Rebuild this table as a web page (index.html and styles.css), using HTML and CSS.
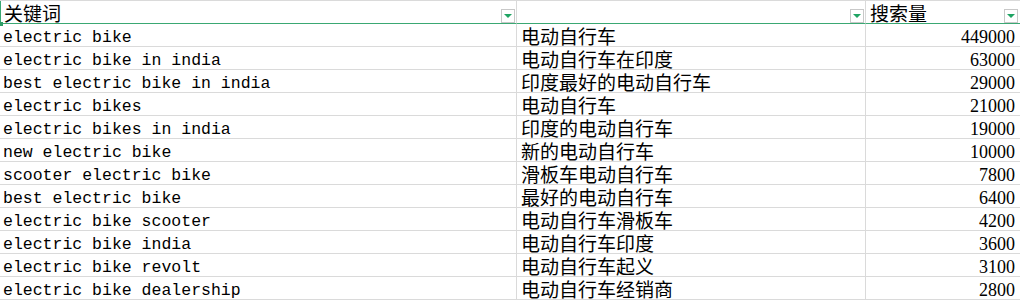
FILE: index.html
```html
<!DOCTYPE html>
<html lang="zh-CN">
<head>
<meta charset="utf-8">
<title>关键词</title>
<link rel="stylesheet" href="styles.css">
</head>
<body>
<div class="sheet">
  <div class="cell head first"><span class="cjk">关键词</span><span class="filter"></span><span class="handle"></span></div>
  <div class="cell head"><span class="filter"></span></div>
  <div class="cell head last"><span class="cjk">搜索量</span><span class="filter"></span></div>

  <div class="cell en">electric bike</div><div class="cell cjk zh">电动自行车</div><div class="cell num last">449000</div>
  <div class="cell en">electric bike in india</div><div class="cell cjk zh">电动自行车在印度</div><div class="cell num last">63000</div>
  <div class="cell en">best electric bike in india</div><div class="cell cjk zh">印度最好的电动自行车</div><div class="cell num last">29000</div>
  <div class="cell en">electric bikes</div><div class="cell cjk zh">电动自行车</div><div class="cell num last">21000</div>
  <div class="cell en">electric bikes in india</div><div class="cell cjk zh">印度的电动自行车</div><div class="cell num last">19000</div>
  <div class="cell en">new electric bike</div><div class="cell cjk zh">新的电动自行车</div><div class="cell num last">10000</div>
  <div class="cell en">scooter electric bike</div><div class="cell cjk zh">滑板车电动自行车</div><div class="cell num last">7800</div>
  <div class="cell en">best electric bike</div><div class="cell cjk zh">最好的电动自行车</div><div class="cell num last">6400</div>
  <div class="cell en">electric bike scooter</div><div class="cell cjk zh">电动自行车滑板车</div><div class="cell num last">4200</div>
  <div class="cell en">electric bike india</div><div class="cell cjk zh">电动自行车印度</div><div class="cell num last">3600</div>
  <div class="cell en">electric bike revolt</div><div class="cell cjk zh">电动自行车起义</div><div class="cell num last">3100</div>
  <div class="cell en">electric bike dealership</div><div class="cell cjk zh">电动自行车经销商</div><div class="cell num last">2800</div>
</div>
</body>
</html>
```

FILE: styles.css
```css
html, body {
  margin: 0;
  padding: 0;
  background: #ffffff;
}

.sheet {
  display: grid;
  grid-template-columns: 517px 349px 154px;
  grid-auto-rows: 23px;
  border-top: 1px solid #dadada;
  color: #000000;
}

.cell {
  display: flex;
  align-items: flex-end;
  border-right: 1px solid #dadada;
  border-bottom: 1px solid #dadada;
  white-space: nowrap;
  position: relative;
}

.cell.last {
  border-right: none;
}

.head {
  height: 22px;
  border-bottom: 1px solid #3aa873;
  padding-left: 4px;
}

.head.first {
  box-shadow: inset 1px 0 0 #3aa873;
}

.handle {
  position: absolute;
  left: 0;
  bottom: -3px;
  width: 3px;
  height: 4px;
  background: #2e9e66;
}

.cjk {
  font-family: "Noto Sans CJK SC", "Noto Sans", sans-serif;
  font-size: 19px;
  line-height: 21px;
}

.en {
  font-family: "Liberation Mono", "DejaVu Sans Mono", monospace;
  font-size: 16.5px;
  line-height: 16px;
  padding-left: 3px;
}

.zh {
  padding-left: 4px;
}

.num {
  justify-content: flex-end;
  font-family: "Liberation Serif", serif;
  font-size: 18px;
  line-height: 17px;
  padding-right: 5px;
}

.filter {
  position: absolute;
  right: 1px;
  bottom: 0;
  width: 12px;
  height: 12px;
  border: 1px solid #c8c8c8;
  background: #ffffff;
  display: flex;
  align-items: center;
  justify-content: center;
}

.filter::after {
  content: "";
  width: 0;
  height: 0;
  border-left: 4px solid transparent;
  border-right: 4px solid transparent;
  border-top: 4px solid #1fa463;
}

.head.last .filter {
  right: 2px;
}
```
